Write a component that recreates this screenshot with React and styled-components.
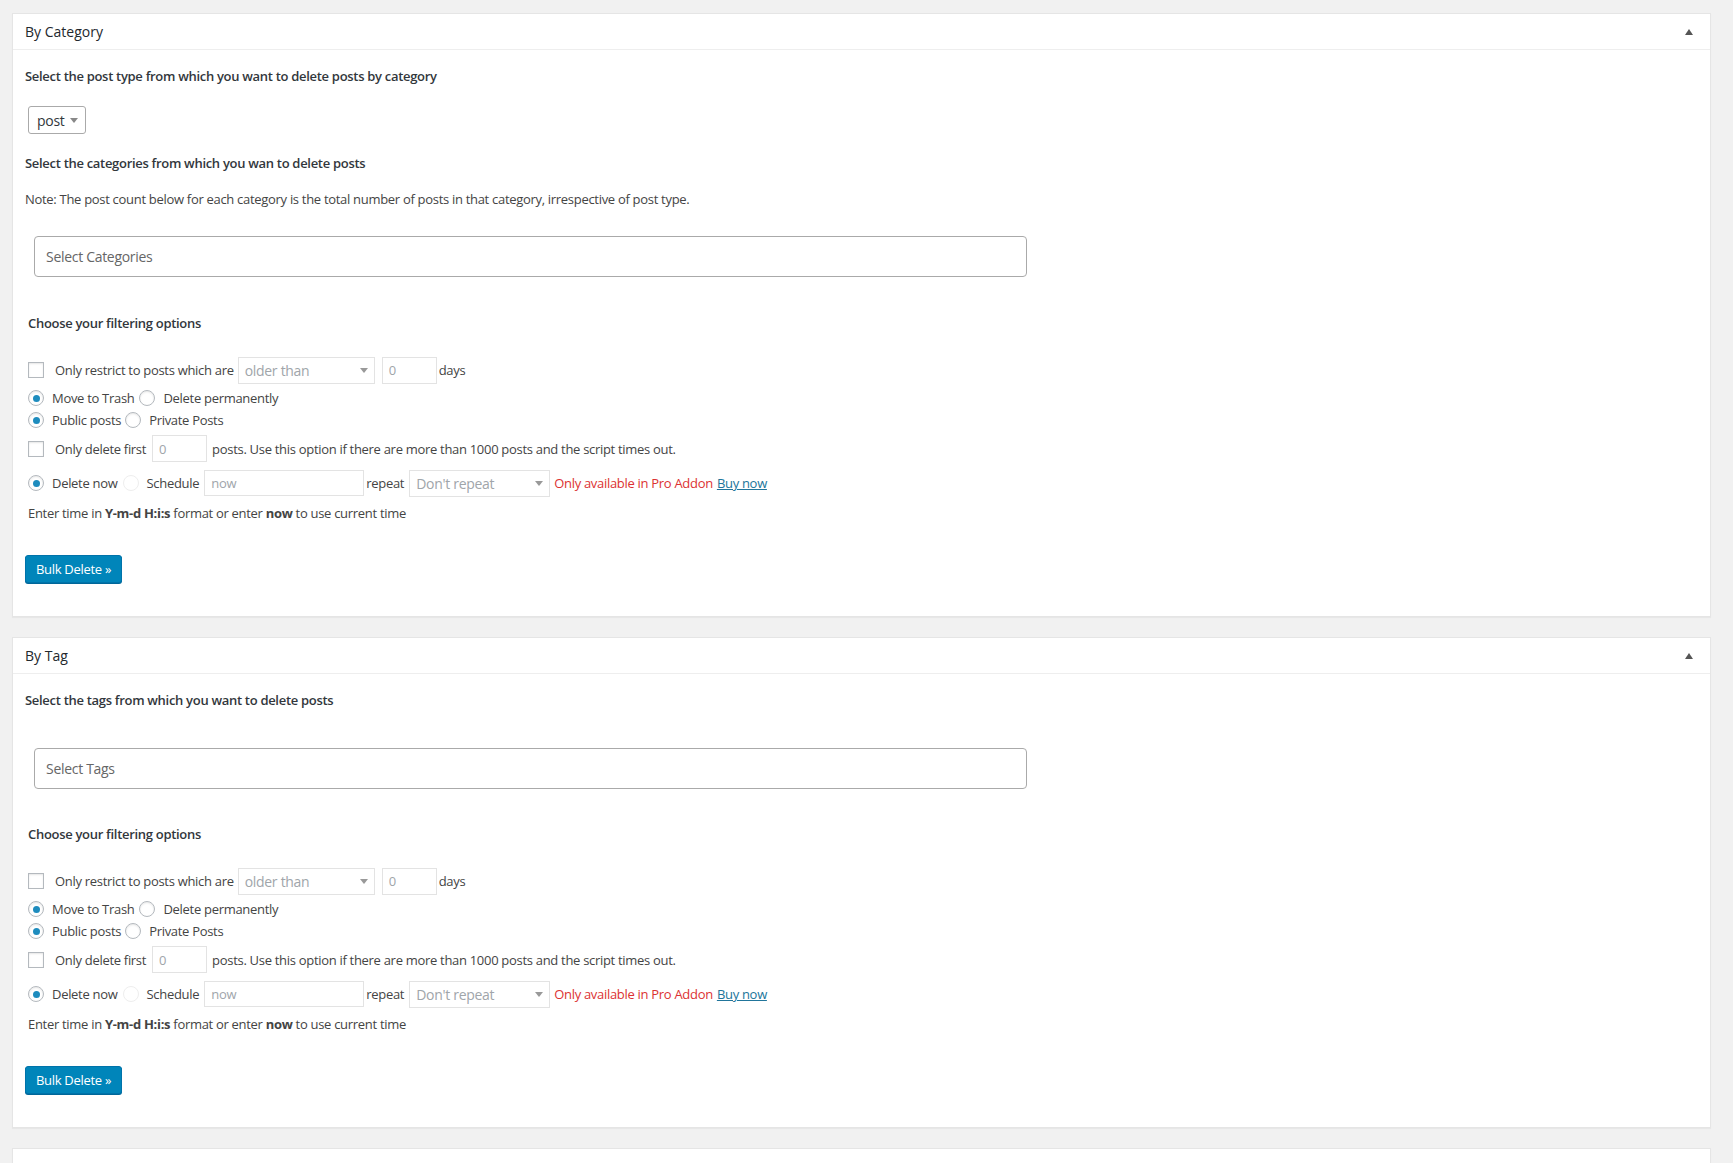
import React from 'react'
import styled, { createGlobalStyle } from 'styled-components'

const GlobalStyle = createGlobalStyle`
  body {
    margin: 0;
    background: #f1f1f1;
    font-family: "Open Sans", "Noto Sans", sans-serif;
    font-size: 13px;
    letter-spacing: -0.3px;
    color: #444;
  }
`

const Page = styled.div`
  padding: 13px 22px 40px 12px;
  display: flex;
  flex-direction: column;
  gap: 20px;
`

const Card = styled.section`
  background: #fff;
  border: 1px solid #e5e5e5;
  box-shadow: 0 1px 1px rgba(0, 0, 0, 0.04);
`

const Header = styled.div`
  height: 35px;
  border-bottom: 1px solid #eee;
  display: flex;
  align-items: center;
  justify-content: space-between;
  padding: 0 12px;

  h2 {
    margin: 0;
    font-size: 14px;
    font-weight: 400;
    letter-spacing: 0;
    color: #23282d;
  }
`

const Toggle = styled.span`
  width: 0;
  height: 0;
  margin-left: auto;
  margin-right: 5px;
  border-left: 4px solid transparent;
  border-right: 4px solid transparent;
  border-bottom: 6px solid #555;
`

const Body = styled.div`
  padding: 16px 12px 33px 12px;
`

const Heading = styled.h4`
  margin: ${({ $top }) => $top || 0}px 0 0 ${({ $indent }) => ($indent ? 3 : 0)}px;
  font-size: 13px;
  line-height: 20px;
  font-weight: 600;
  color: #32373c;
`

const Note = styled.p`
  margin: ${({ $top }) => $top || 0}px 0 0 0;
  line-height: 20px;
  color: #444;
`

const PostTypeSelect = styled.div`
  margin: 20px 0 0 3px;
  width: 58px;
  height: 28px;
  box-sizing: border-box;
  border: 1px solid #aaa;
  border-radius: 3px;
  display: flex;
  align-items: center;
  justify-content: space-between;
  padding: 0 7px 0 8px;
  font-size: 14px;
  color: #32373c;
`

const Caret = styled.span`
  width: 0;
  height: 0;
  border-left: 4px solid transparent;
  border-right: 4px solid transparent;
  border-top: 5px solid ${({ $light }) => ($light ? '#999' : '#888')};
`

const MultiSelect = styled.div`
  margin: ${({ $top }) => $top}px 0 0 9px;
  width: 993px;
  height: 41px;
  box-sizing: border-box;
  border: 1px solid #aaa;
  border-radius: 4px;
  padding: 0 11px;
  display: flex;
  align-items: center;
  font-size: 14px;
  color: #666;
`

const Rows = styled.div`
  margin: 22px 0 0 3px;
  display: flex;
  flex-direction: column;
`

const Row = styled.div`
  height: ${({ $h }) => $h}px;
  display: flex;
  align-items: center;
  white-space: nowrap;
`

const Checkbox = styled.span`
  width: 16px;
  height: 16px;
  box-sizing: border-box;
  border: 1px solid #b4b9be;
  box-shadow: inset 0 1px 2px rgba(0, 0, 0, 0.1);
  margin-right: 11px;
  flex: none;
`

const Radio = styled.span`
  width: 16px;
  height: 16px;
  box-sizing: border-box;
  border-radius: 50%;
  border: 1px solid ${({ $disabled }) => ($disabled ? '#eee' : '#b4b9be')};
  box-shadow: ${({ $disabled }) => ($disabled ? 'none' : 'inset 0 1px 2px rgba(0, 0, 0, 0.1)')};
  margin: 0 8px 0 ${({ $gap }) => $gap || 0}px;
  flex: none;
  display: flex;
  align-items: center;
  justify-content: center;

  &::after {
    content: '';
    display: ${({ $checked }) => ($checked ? 'block' : 'none')};
    width: 7px;
    height: 7px;
    border-radius: 50%;
    background: #1e8cbe;
  }
`

const Field = styled.div`
  width: ${({ $w }) => $w}px;
  height: ${({ $h }) => $h || 27}px;
  box-sizing: border-box;
  border: 1px solid #e3e3e3;
  margin: 0 ${({ $right }) => $right || 0}px 0 ${({ $left }) => $left || 0}px;
  padding: 0 6px;
  display: flex;
  align-items: center;
  justify-content: space-between;
  color: #a0a5aa;
  font-size: ${({ $big }) => ($big ? 14 : 13)}px;
  flex: none;
`

const Pro = styled.span`
  color: #dc3232;
  margin-left: 4px;
`

const BuyLink = styled.a`
  color: #21759b;
  text-decoration: underline;
  margin-left: 4px;
`

const Button = styled.button`
  margin: 27px 0 0 0;
  height: 28px;
  padding: 0 10px;
  background: #0085ba;
  border: 1px solid #0073aa;
  border-radius: 3px;
  box-shadow: 0 1px 0 #006799;
  color: #fff;
  font-family: inherit;
  font-size: 13px;
  letter-spacing: -0.3px;
  cursor: pointer;
`

const FilterOptions = () => (
  <>
    <Rows>
      <Row $h={30}>
        <Checkbox />
        <span>Only restrict to posts which are</span>
        <Field $w={137} $left={4} $big>
          older than <Caret $light />
        </Field>
        <Field $w={55} $left={7} $right={2}>0</Field>
        <span>days</span>
      </Row>
      <Row $h={26}>
        <Radio $checked />
        <span>Move to Trash</span>
        <Radio $gap={5} />
        <span>Delete permanently</span>
      </Row>
      <Row $h={18}>
        <Radio $checked />
        <span>Public posts</span>
        <Radio $gap={4} />
        <span>Private Posts</span>
      </Row>
      <Row $h={39}>
        <Checkbox />
        <span>Only delete first</span>
        <Field $w={55} $left={6} $right={5}>0</Field>
        <span>posts. Use this option if there are more than 1000 posts and the script times out.</span>
      </Row>
      <Row $h={30}>
        <Radio $checked />
        <span>Delete now</span>
        <Radio $gap={5} $disabled />
        <span>Schedule</span>
        <Field $w={160} $h={26} $left={5} $right={2}>now</Field>
        <span>repeat</span>
        <Field $w={141} $left={5} $big>
          Don't repeat <Caret $light />
        </Field>
        <Pro>Only available in Pro Addon</Pro>
        <BuyLink href="#">Buy now</BuyLink>
      </Row>
      <Row $h={30}>
        <span>
          Enter time in <b>Y-m-d H:i:s</b> format or enter <b>now</b> to use current time
        </span>
      </Row>
    </Rows>
    <Button>Bulk Delete »</Button>
  </>
)

const App = () => (
  <>
    <GlobalStyle />
    <Page>
      <Card>
        <Header>
          <h2>By Category</h2>
          <Toggle />
        </Header>
        <Body>
          <Heading>Select the post type from which you want to delete posts by category</Heading>
          <PostTypeSelect>
            post <Caret />
          </PostTypeSelect>
          <Heading $top={19}>Select the categories from which you wan to delete posts</Heading>
          <Note $top={16}>
            Note: The post count below for each category is the total number of posts in that category, irrespective of post type.
          </Note>
          <MultiSelect $top={27}>Select Categories</MultiSelect>
          <Heading $top={36} $indent>Choose your filtering options</Heading>
          <FilterOptions />
        </Body>
      </Card>

      <Card>
        <Header>
          <h2>By Tag</h2>
          <Toggle />
        </Header>
        <Body>
          <Heading>Select the tags from which you want to delete posts</Heading>
          <MultiSelect $top={38}>Select Tags</MultiSelect>
          <Heading $top={35} $indent>Choose your filtering options</Heading>
          <FilterOptions />
        </Body>
      </Card>

      <Card>
        <Header />
        <Body />
      </Card>
    </Page>
  </>
)

export default App
